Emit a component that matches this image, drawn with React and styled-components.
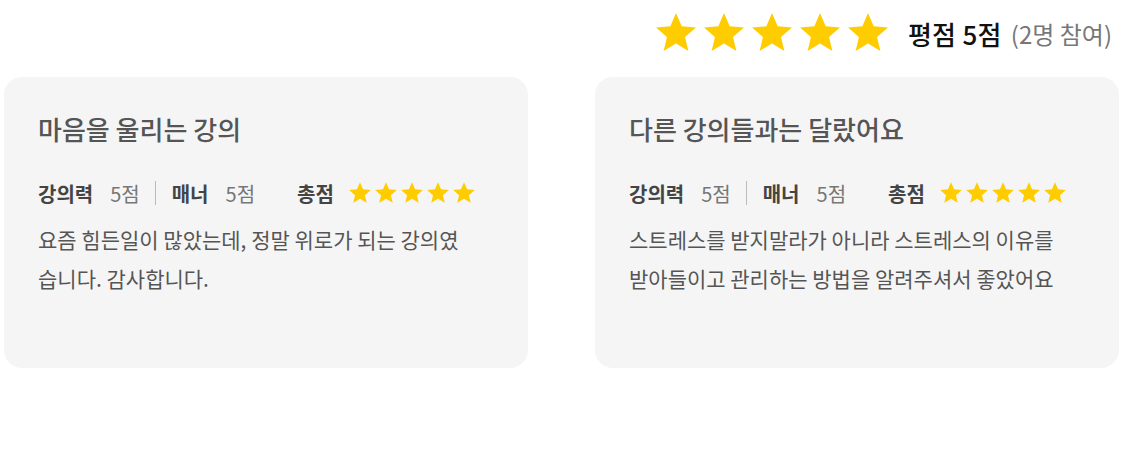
import React from "react";
import styled, { createGlobalStyle } from "styled-components";

const GlobalStyle = createGlobalStyle`
  html, body { margin: 0; padding: 0; background: #fff; }
  body { font-family: "Noto Sans CJK KR", "Noto Sans", sans-serif; }
`;

const Page = styled.div`
  width: 1124px;
  padding: 0 5px 0 4px;
  box-sizing: border-box;
`;

const Header = styled.div`
  display: flex;
  justify-content: flex-end;
  align-items: center;
  height: 66px;
  padding: 0 7px 0 0;
  margin-bottom: 11px;
`;

const StarRow = styled.div`
  display: flex;
  align-items: center;
  margin-left: ${(p) => p.$ml || 0}px;
  margin-right: ${(p) => p.$mr || 0}px;
`;

const StarSvg = styled.svg`
  display: block;
  width: ${(p) => p.$size}px;
  height: ${(p) => p.$size}px;
  fill: #ffcc00;
  flex: none;
`;

const Score = styled.span`
  font-size: 26px;
  font-weight: 500;
  color: #111;
  letter-spacing: 0.3px;
`;

const Participants = styled.span`
  font-size: 24px;
  color: #777;
  margin-left: 9px;
`;

const Cards = styled.div`
  display: flex;
  gap: 67px;
`;

const Card = styled.div`
  width: 524px;
  height: 291px;
  box-sizing: border-box;
  background: #f5f5f5;
  border-radius: 18px;
  padding: 33px 34px 0 34px;
`;

const Title = styled.h2`
  margin: 0;
  font-size: 26px;
  line-height: 38px;
  font-weight: 500;
  color: #555;
`;

const Meta = styled.div`
  display: flex;
  align-items: center;
  margin-top: 32px;
  height: 26px;
  font-size: 20px;
`;

const Label = styled.span`
  font-weight: 700;
  color: #444;
  margin-left: ${(p) => p.$ml || 0}px;
`;

const Value = styled.span`
  color: #777;
  margin-left: 17px;
`;

const Divider = styled.span`
  width: 1px;
  height: 24px;
  background: #bbb;
  margin: 0 16px 0 15px;
`;

const Body = styled.p`
  margin: 14px 0 0 0;
  font-size: 21px;
  line-height: 39px;
  color: #555;
`;

const Line = styled.span`
  display: block;
  white-space: nowrap;
`;

const Star = ({ size }) => (
  <StarSvg $size={size} viewBox="0 0 24 24">
    <path d="M12 17.27L18.18 21l-1.64-7.03L22 9.24l-7.19-.61L12 2 9.19 8.63 2 9.24l5.46 4.73L5.82 21z" />
  </StarSvg>
);

const Stars = ({ size, ml, mr }) => (
  <StarRow $ml={ml} $mr={mr}>
    {[0, 1, 2, 3, 4].map((i) => (
      <Star key={i} size={size} />
    ))}
  </StarRow>
);

const reviews = [
  {
    title: "마음을 울리는 강의",
    lecture: 5,
    manner: 5,
    lines: ["요즘 힘든일이 많았는데, 정말 위로가 되는 강의였", "습니다. 감사합니다."],
  },
  {
    title: "다른 강의들과는 달랐어요",
    lecture: 5,
    manner: 5,
    lines: ["스트레스를 받지말라가 아니라 스트레스의 이유를", "받아들이고 관리하는 방법을 알려주셔서 좋았어요"],
  },
];

export default function App() {
  return (
    <Page>
      <GlobalStyle />
      <Header>
        <Stars size={48} mr={16} />
        <Score>평점 5점</Score>
        <Participants>(2명 참여)</Participants>
      </Header>
      <Cards>
        {reviews.map((r) => (
          <Card key={r.title}>
            <Title>{r.title}</Title>
            <Meta>
              <Label>강의력</Label>
              <Value>{r.lecture}점</Value>
              <Divider />
              <Label>매너</Label>
              <Value>{r.manner}점</Value>
              <Label $ml={42}>총점</Label>
              <Stars size={26} ml={13} />
            </Meta>
            <Body>
              {r.lines.map((l) => (
                <Line key={l}>{l}</Line>
              ))}
            </Body>
          </Card>
        ))}
      </Cards>
    </Page>
  );
}
